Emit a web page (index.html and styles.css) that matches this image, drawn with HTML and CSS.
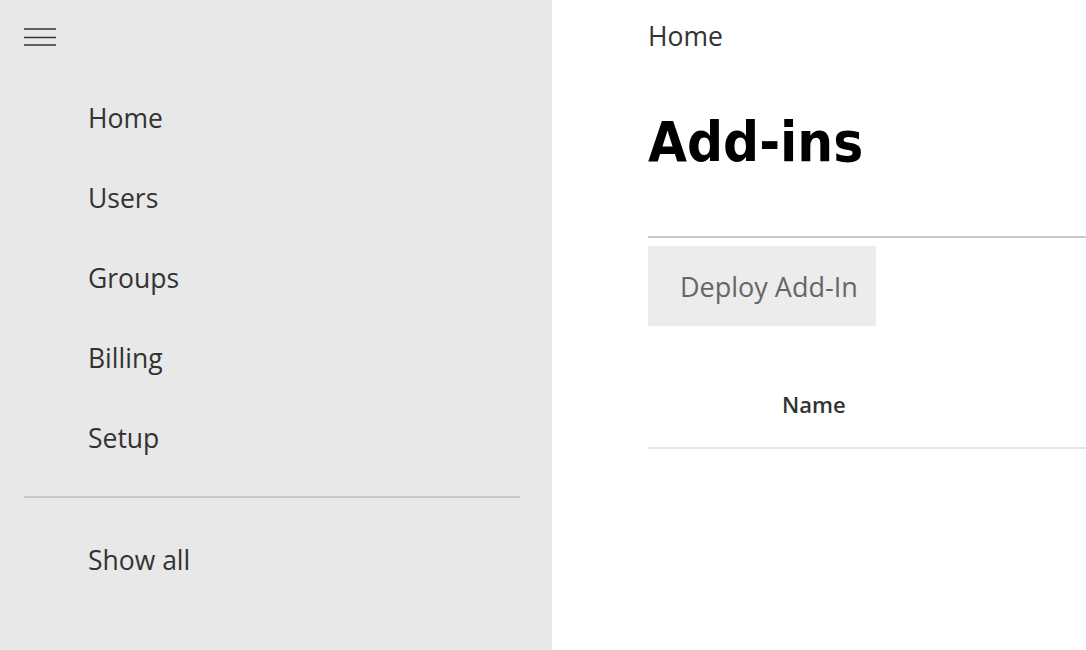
FILE: index.html
```html
<!DOCTYPE html>
<html lang="en">
<head>
  <meta charset="UTF-8">
  <meta name="viewport" content="width=device-width, initial-scale=1.0">
  <title>Add-ins</title>
  <link rel="stylesheet" href="styles.css">
</head>
<body>
  <div class="layout">
    <nav class="sidebar">
      <div class="sidebar-top">
        <button class="menu-button" aria-label="Menu">
          <svg width="32" height="18" viewBox="0 0 32 18">
            <path d="M0 1H32M0 9.5H32M0 17H32" stroke="#333" stroke-width="1.6" fill="none"/>
          </svg>
        </button>
      </div>
      <ul class="nav-list">
        <li class="nav-item">Home</li>
        <li class="nav-item">Users</li>
        <li class="nav-item">Groups</li>
        <li class="nav-item">Billing</li>
        <li class="nav-item">Setup</li>
      </ul>
      <hr class="nav-divider">
      <ul class="nav-list">
        <li class="nav-item">Show all</li>
      </ul>
    </nav>

    <main class="content">
      <div class="breadcrumb">Home</div>
      <h1 class="page-title">Add-ins</h1>

      <div class="toolbar">
        <button class="command">Deploy Add-In</button>
      </div>

      <div class="list-header">
        <span class="col-name">Name</span>
      </div>
    </main>
  </div>
</body>
</html>
```

FILE: styles.css
```css
body {
  margin: 0;
  font-family: "Open Sans", "Noto Sans", sans-serif;
  color: #333;
  background-color: #fff;
  overflow: hidden;
}

.layout {
  display: flex;
  height: 650px;
}

/* left navigation */
.sidebar {
  width: 552px;
  flex-shrink: 0;
  background-color: #e8e8e8;
}

.sidebar-top {
  height: 72px;
  display: flex;
  align-items: center;
  padding-left: 24px;
}

.menu-button {
  background: none;
  border: none;
  padding: 0;
  margin-top: 1px;
  display: flex;
}

.nav-list {
  list-style: none;
  margin: 0;
  padding: 6px 0 0;
}

.nav-item {
  height: 80px;
  line-height: 80px;
  padding-left: 88px;
  font-size: 26.5px;
  color: #333;
}

.nav-divider {
  margin: 18px 32px 16px 24px;
  border: none;
  border-top: 2px solid #c8c8c8;
}

/* main area */
.content {
  flex: 1;
  padding-left: 96px;
}

.breadcrumb {
  height: 72px;
  line-height: 72px;
  font-size: 26.5px;
  color: #333;
}

.page-title {
  margin: 0;
  height: 166px;
  font-family: "DejaVu Sans Condensed", "DejaVu Sans", sans-serif;
  font-stretch: condensed;
  font-weight: bold;
  font-size: 56px;
  line-height: 140px;
  color: #000;
  border-bottom: 2px solid #c8c8c8;
  box-sizing: border-box;
}

.toolbar {
  padding-top: 8px;
}

.command {
  width: 228px;
  height: 80px;
  background-color: #ececec;
  border: none;
  padding: 0 0 0 32px;
  text-align: left;
  font-family: inherit;
  font-size: 27px;
  color: #666;
}

.list-header {
  height: 123px;
  line-height: 156px;
  padding-left: 134px;
  border-bottom: 2px solid #e6e6e6;
  box-sizing: border-box;
  font-size: 22px;
  font-weight: 600;
  color: #333;
}
```
